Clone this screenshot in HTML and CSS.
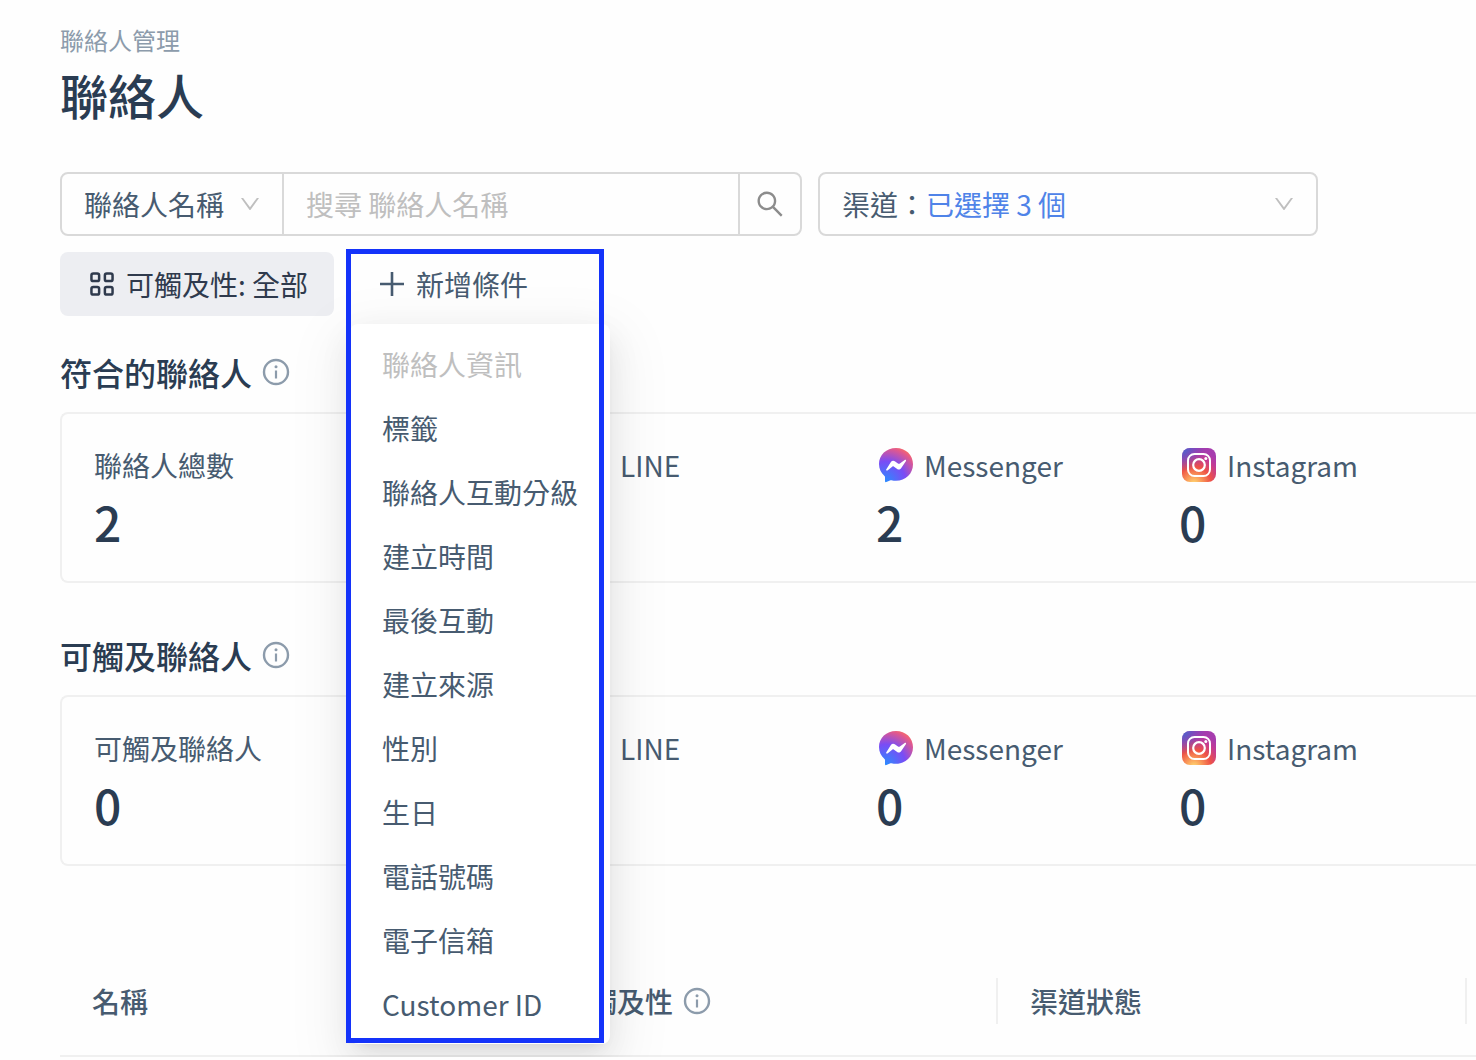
FILE: index.html
```html
<!DOCTYPE html>
<html lang="zh-Hant">
<head>
    <meta charset="UTF-8">
    <meta name="viewport" content="width=device-width, initial-scale=1.0">
    <title>聯絡人</title>
    <link rel="stylesheet" href="styles.css">
</head>
<body>
    <!-- Shared icons -->
    <svg class="sprite" aria-hidden="true">
        <defs>
            <radialGradient id="messengerFill" cx="0.19" cy="0.99" r="1.09">
                <stop offset="0" stop-color="#2a8cff"/>
                <stop offset="0.55" stop-color="#7a4cf5"/>
                <stop offset="0.9" stop-color="#e0588f"/>
                <stop offset="1" stop-color="#f5696b"/>
            </radialGradient>
            <radialGradient id="instagramFill" cx="0.35" cy="1.05" r="1">
                <stop offset="0" stop-color="#ffdb73"/>
                <stop offset="0.2" stop-color="#fba45c"/>
                <stop offset="0.5" stop-color="#ee5245"/>
                <stop offset="0.8" stop-color="#c13a97"/>
                <stop offset="1" stop-color="#a63cae"/>
            </radialGradient>
            <radialGradient id="instagramBlue" cx="0" cy="0" r="0.7">
                <stop offset="0" stop-color="#3f6bd0"/>
                <stop offset="1" stop-color="#6a45c8" stop-opacity="0"/>
            </radialGradient>
        </defs>
        <symbol id="down" viewBox="0 0 1024 1024">
            <path fill="currentColor" d="M884 256h-75c-5.1 0-9.9 2.5-12.9 6.6L512 654.2 227.9 262.6c-3-4.1-7.8-6.6-12.9-6.6h-75c-6.5 0-10.3 7.4-6.5 12.7l352.6 486.1c12.8 17.6 39 17.6 51.7 0l352.6-486.1c3.9-5.3.1-12.7-6.4-12.7z"/>
        </symbol>
        <symbol id="info" viewBox="0 0 28 28">
            <circle cx="14" cy="14" r="12" fill="none" stroke="currentColor" stroke-width="2.4"/>
            <circle cx="14" cy="8.8" r="1.5" fill="currentColor"/>
            <path d="M14 12.5v8" stroke="currentColor" stroke-width="2.2"/>
        </symbol>
        <symbol id="line" viewBox="0 0 36 36">
            <rect x="1" y="1" width="34" height="34" rx="8" fill="#06c755"/>
            <path fill="#fff" d="M18 8c-6.6 0-12 4.2-12 9.4 0 4.7 4.3 8.600 10 9.300 1 .2.9 1 .6 3.300 5-2.300 13.400-7 13.400-12.600C30 12.200 24.600 8 18 8z"/>
        </symbol>
        <symbol id="messenger" viewBox="0 0 36 36">
            <path fill="url(#messengerFill)" d="M18 1C8.4 1 1 7.900 1 17c0 4.900 2.100 9 5.500 11.900.4.300.5.700.5 1.200v4.200c0 .8.700 1.100 1.400.8l4.100-1.800c.3-.1.700-.1 1-.1 1.400.4 2.900.6 4.500.6 9.600 0 17-7 17-16.500C35 7.900 27.600 1 18 1z"/>
            <path fill="#fff" d="M8.200 22.400l4.700-7.500c.9-1.300 2.700-1.600 3.900-.7l3.500 2.500c.4.200.9.200 1.200 0l5.200-3.700c.8-.6 1.800.3 1.300 1.100l-4.900 7.200c-.9 1.300-2.700 1.600-3.900.7l-3.500-2.500c-.4-.2-.9-.2-1.200 0l-5 3.900c-.8.500-1.800-.2-1.300-1z"/>
        </symbol>
        <symbol id="instagram" viewBox="0 0 36 36">
            <rect x="1" y="1" width="34" height="34" rx="8" fill="url(#instagramFill)"/>
            <rect x="1" y="1" width="34" height="34" rx="8" fill="url(#instagramBlue)"/>
            <rect x="7" y="7" width="22" height="22" rx="6.5" fill="none" stroke="#fff" stroke-width="2"/>
            <circle cx="18" cy="18" r="5.8" fill="none" stroke="#fff" stroke-width="2.2"/>
            <circle cx="24.8" cy="11.4" r="1.5" fill="#fff"/>
        </symbol>
    </svg>

    <main class="page">
        <div class="breadcrumb">聯絡人管理</div>
        <h1>聯絡人</h1>

        <form class="filters">
            <div class="search-group">
                <div class="field-select">
                    <select aria-label="搜尋欄位">
                        <option>聯絡人名稱</option>
                    </select>
                    <svg class="icon-down"><use href="#down"/></svg>
                </div>
                <input type="text" class="search-input" placeholder="搜尋 聯絡人名稱" aria-label="搜尋">
                <button type="submit" class="search-button" aria-label="搜尋">
                    <svg viewBox="0 0 1024 1024"><path fill="currentColor" d="M909.6 854.5L649.9 594.8C690.2 542.7 712 479 712 412c0-80.2-31.3-155.4-87.9-212.1-56.6-56.7-132-87.9-212.1-87.9s-155.5 31.3-212.1 87.9C143.2 256.5 112 331.8 112 412c0 80.1 31.3 155.5 87.9 212.1C256.5 680.8 331.8 712 412 712c67 0 130.6-21.8 182.7-62l259.7 259.6a8.2 8.2 0 0011.6 0l43.6-43.5a8.2 8.2 0 000-11.6zM570.4 570.4C528 612.7 471.8 636 412 636s-116-23.3-158.4-65.6C211.3 528 188 471.8 188 412s23.3-116.1 65.6-158.4C296 211.3 352.2 188 412 188s116.1 23.2 158.4 65.6S636 352.2 636 412s-23.3 116.1-65.6 158.4z"/></svg>
                </button>
            </div>
            <div class="channel-select">
                <label for="channel">渠道：</label>
                <select id="channel">
                    <option>已選擇 3 個</option>
                </select>
                <svg class="icon-down"><use href="#down"/></svg>
            </div>
        </form>

        <div class="conditions">
            <button type="button" class="chip">
                <svg viewBox="0.5 0.5 25 25" fill="none" stroke="currentColor" stroke-width="2.6">
                    <rect x="2" y="2" width="8" height="8" rx="2"/>
                    <rect x="16" y="2" width="8" height="8" rx="2"/>
                    <rect x="2" y="16" width="8" height="8" rx="2"/>
                    <rect x="16" y="16" width="8" height="8" rx="2"/>
                </svg>
                可觸及性: 全部
            </button>
            <div class="dropdown">
                <button type="button" class="add-button">
                    <svg viewBox="0 0 24 24" stroke="currentColor" stroke-width="2.6"><path d="M12 0v24M0 12h24"/></svg>
                    新增條件
                </button>
                <ul class="menu">
                    <li class="menu-title">聯絡人資訊</li>
                    <li>標籤</li>
                    <li>聯絡人互動分級</li>
                    <li>建立時間</li>
                    <li>最後互動</li>
                    <li>建立來源</li>
                    <li>性別</li>
                    <li>生日</li>
                    <li>電話號碼</li>
                    <li>電子信箱</li>
                    <li>Customer ID</li>
                </ul>
                <div class="highlight"></div>
            </div>
        </div>

        <section class="summary">
            <h2>符合的聯絡人 <svg class="icon-info"><use href="#info"/></svg></h2>
            <div class="card">
                <div class="stat">
                    <div class="stat-label">聯絡人總數</div>
                    <div class="stat-value">2</div>
                </div>
                <div class="stat">
                    <div class="stat-label"><svg><use href="#line"/></svg>LINE</div>
                </div>
                <div class="stat">
                    <div class="stat-label"><svg><use href="#messenger"/></svg>Messenger</div>
                    <div class="stat-value">2</div>
                </div>
                <div class="stat">
                    <div class="stat-label"><svg><use href="#instagram"/></svg>Instagram</div>
                    <div class="stat-value">0</div>
                </div>
            </div>
        </section>

        <section class="summary">
            <h2>可觸及聯絡人 <svg class="icon-info"><use href="#info"/></svg></h2>
            <div class="card">
                <div class="stat">
                    <div class="stat-label">可觸及聯絡人</div>
                    <div class="stat-value">0</div>
                </div>
                <div class="stat">
                    <div class="stat-label"><svg><use href="#line"/></svg>LINE</div>
                </div>
                <div class="stat">
                    <div class="stat-label"><svg><use href="#messenger"/></svg>Messenger</div>
                    <div class="stat-value">0</div>
                </div>
                <div class="stat">
                    <div class="stat-label"><svg><use href="#instagram"/></svg>Instagram</div>
                    <div class="stat-value">0</div>
                </div>
            </div>
        </section>

        <div class="table-wrap">
            <table>
                <thead>
                    <tr>
                        <th>名稱</th>
                        <th><span class="th-text">可觸及性 <svg class="icon-info"><use href="#info"/></svg></span></th>
                        <th>渠道狀態</th>
                    </tr>
                </thead>
            </table>
        </div>
    </main>
</body>
</html>
```

FILE: styles.css
```css
* {
    box-sizing: border-box;
}
body {
    margin: 0;
    background-color: #fefefe;
    color: #475b70;
    font-family: "Noto Sans CJK TC", sans-serif;
    font-size: 28px;
    line-height: 40px;
}
button,
input,
select {
    font: inherit;
    color: inherit;
    background: none;
    border: none;
    margin: 0;
    padding: 0;
    outline: none;
}
button {
    cursor: pointer;
}
select {
    appearance: none;
}
svg {
    flex: none;
}
.sprite {
    position: absolute;
    width: 0;
    height: 0;
}
.page {
    padding: 22px 0 0 60px;
}
.breadcrumb {
    color: #8c9bab;
    font-size: 24px;
    line-height: 36px;
}
h1 {
    margin: 4px 0 46px;
    color: #2a3c52;
    font-size: 48px;
    font-weight: 500;
    line-height: 64px;
}

/* Filters */
.filters {
    display: grid;
    grid-template-columns: 742fr 500fr;
    gap: 16px;
    max-width: 1258px;
    height: 64px;
}
.search-group,
.channel-select {
    display: flex;
    border: 2px solid #d9d9d9;
    border-radius: 8px;
}
.channel-select {
    position: relative;
    align-items: center;
    padding-left: 22px;
}
.channel-select select {
    flex: 1;
    height: 60px;
    color: #4f83e8;
}
.field-select {
    position: relative;
    display: flex;
}
.field-select select {
    width: 220px;
    padding-left: 22px;
}
.icon-down {
    position: absolute;
    top: 18px;
    right: 20px;
    width: 24px;
    height: 24px;
    color: #bfbfbf;
    pointer-events: none;
}
.search-input {
    flex: 1;
    min-width: 0;
    padding: 0 22px;
    border: solid #d9d9d9;
    border-width: 0 2px;
}
.search-input::placeholder {
    color: #bfbfbf;
}
.search-button {
    display: flex;
    align-items: center;
    justify-content: center;
    width: 60px;
    color: #8c8c8c;
}
.search-button svg {
    width: 32px;
    height: 32px;
}

/* Conditions */
.conditions {
    display: flex;
    gap: 16px;
    margin-top: 16px;
}
.chip,
.add-button {
    display: flex;
    align-items: center;
    gap: 12px;
    height: 64px;
    padding: 0 26px 0 30px;
    border-radius: 8px;
}
.chip {
    background-color: #edeef2;
    color: #2f3a4d;
}
.chip svg,
.add-button svg {
    width: 24px;
    height: 24px;
}
.dropdown {
    position: relative;
}
.menu {
    position: absolute;
    top: 72px;
    left: 0;
    z-index: 1;
    width: 260px;
    margin: 0;
    padding: 8px 0;
    list-style: none;
    background-color: #fff;
    border-radius: 8px;
    box-shadow: 0 6px 12px -8px rgba(0, 0, 0, 0.12),
        0 12px 32px rgba(0, 0, 0, 0.08),
        0 18px 56px 16px rgba(0, 0, 0, 0.05);
}
.menu li {
    padding: 12px 32px;
    white-space: nowrap;
}
.menu .menu-title {
    color: #bfbfbf;
}
.highlight {
    position: absolute;
    top: -3px;
    left: -4px;
    z-index: 2;
    width: 258px;
    height: 794px;
    border: 5px solid #1433fa;
    pointer-events: none;
}

/* Summary cards */
.summary {
    margin-top: 32px;
}
.summary + .summary {
    margin-top: 48px;
}
h2 {
    display: flex;
    align-items: center;
    gap: 10px;
    margin: 0 0 16px;
    color: #2a3c52;
    font-size: 32px;
    font-weight: 500;
    line-height: 48px;
}
.icon-info {
    width: 28px;
    height: 28px;
    color: #8c9bab;
}
.card {
    display: grid;
    grid-template-columns: 478fr 304fr 303fr 297fr;
    padding: 31px 0 30px 32px;
    border: 2px solid #f0f0f0;
    border-right: none;
    border-radius: 8px 0 0 8px;
}
.stat-label {
    display: flex;
    align-items: center;
    gap: 10px;
}
.stat-label svg {
    width: 36px;
    height: 36px;
    margin-left: 2px;
}
.stat-value {
    margin-top: 6px;
    color: #2a3c52;
    font-size: 48px;
    font-weight: 500;
    line-height: 60px;
}

/* Table */
.table-wrap {
    margin-top: 81px;
    padding-right: 9px;
    border-bottom: 2px solid #f0f0f0;
}
table {
    width: 100%;
    border-collapse: collapse;
    table-layout: fixed;
}
th {
    position: relative;
    height: 108px;
    padding: 0 32px;
    font-weight: 500;
    text-align: left;
}
.th-text {
    display: flex;
    align-items: center;
    gap: 10px;
}
th + th::before,
th:last-child::after {
    content: "";
    position: absolute;
    top: 31px;
    left: -2px;
    width: 2px;
    height: 46px;
    background-color: #f0f0f0;
}
th:last-child::after {
    left: auto;
    right: 0;
}
```
